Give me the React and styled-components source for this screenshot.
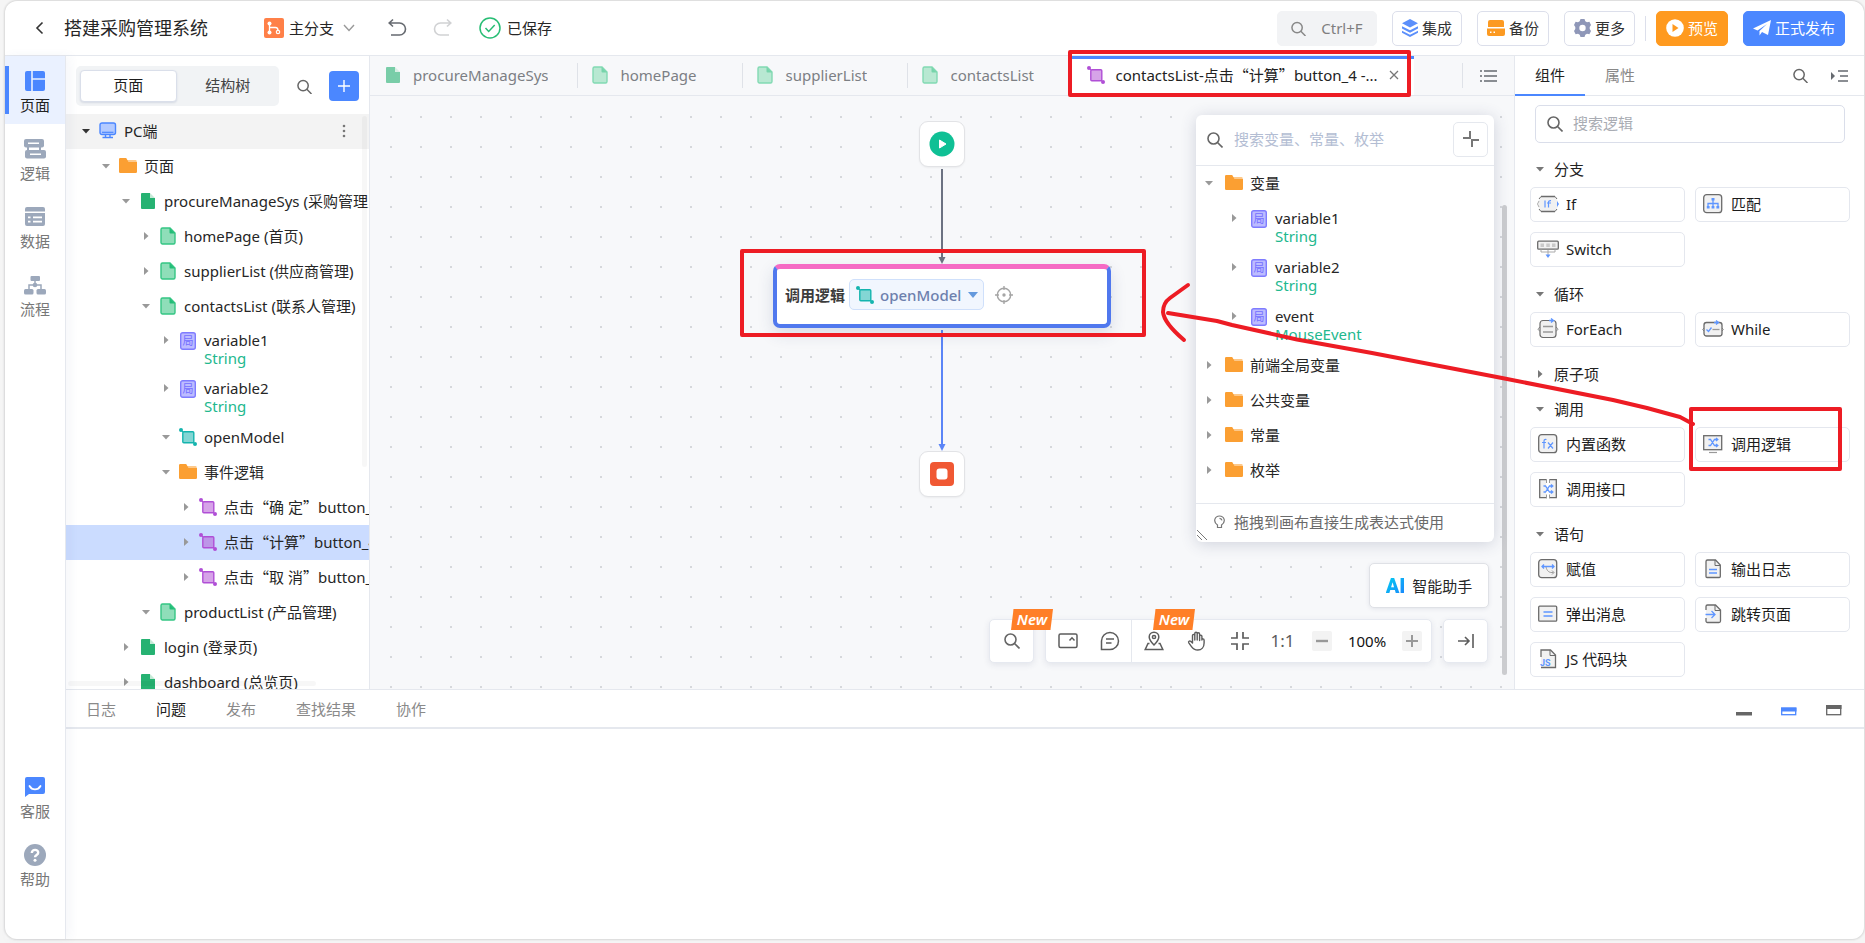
import React from "react";
import styled, { createGlobalStyle, css } from "styled-components";

const BLUE = "#4b87ff";
const GREY = "#666a70";
const LINE = "#e5e8ee";
const RED = "#ed1c24";

const GlobalStyle = createGlobalStyle`
  *, *::before, *::after { box-sizing: border-box; }
  body {
    margin: 0;
    background: #f5f5f5;
    color: #262626;
    font: 15px/20px "Noto Sans", "Noto Sans CJK SC", sans-serif;
  }
  button, input, select { font: inherit; color: inherit; }
  button { border: 0; background: none; padding: 0; cursor: pointer; }
  svg { display: block; flex: none; }
`;

/* ---------- frame ---------- */

const Page = styled.div`
  height: 100vh;
  min-height: 900px;
  padding: 1px 1px 4px 5px;
`;
const Frame = styled.div`
  position: relative;
  height: 100%;
  display: flex;
  flex-direction: column;
  background: #fff;
  border-radius: 12px;
  box-shadow: 0 0 2px 1px rgba(0, 0, 0, 0.12);
`;
const Body = styled.div`
  flex: 1;
  min-height: 0;
  display: flex;
`;
const Main = styled.main`
  flex: 1;
  min-width: 0;
  display: flex;
  flex-direction: column;
`;
const Workspace = styled.div`
  flex: 1;
  min-height: 0;
  display: flex;
`;
const RedBox = styled.span`
  position: absolute;
  z-index: 5;
  inset: ${(p) => p.$inset};
  border: 4px solid ${RED};
  border-radius: 2px;
  pointer-events: none;
`;

/* ---------- header ---------- */

const Header = styled.header`
  height: 55px;
  flex: none;
  display: flex;
  align-items: center;
  padding: 0 19px 0 29px;
  border-bottom: 1px solid ${LINE};
`;
const Title = styled.h1`
  margin: 0 56px 0 20px;
  font-size: 18px;
  line-height: 24px;
  font-weight: 400;
`;
const BranchButton = styled.button`
  display: flex;
  align-items: center;
  gap: 5px;
  margin-right: 32px;
  svg:last-child { margin-left: 4px; }
`;
const HistoryButton = styled.button`
  width: 20px;
  margin-right: 26px;
  color: ${GREY};
  opacity: ${(p) => (p.disabled ? 0.3 : 1)};
`;
const Saved = styled.span`
  display: flex;
  align-items: center;
  gap: 6px;
`;
const HeaderActions = styled.div`
  margin-left: auto;
  display: flex;
  align-items: center;
  gap: 15px;
`;
const HeaderButton = styled.button`
  height: 35px;
  padding: 0 9px;
  display: flex;
  align-items: center;
  justify-content: center;
  gap: 4px;
  border-radius: 5px;
  border: 1px solid #dcdfeb;
  color: #333;
  white-space: nowrap;
  ${(p) => p.$tone && css`
    border-color: ${p.$tone};
    background: ${p.$tone};
    color: #fff;
  `}
`;
const QuickSearch = styled(HeaderButton)`
  width: 100px;
  gap: 15px;
  border-color: #f2f3f5;
  background: #f2f3f5;
  color: #7f7f7f;
`;
const HeaderDivider = styled.span`
  width: 1px;
  height: 25px;
  margin: 0 -5px;
  background: #dcdfeb;
`;

/* ---------- rail ---------- */

const Rail = styled.nav`
  width: 61px;
  flex: none;
  display: flex;
  flex-direction: column;
  padding-bottom: 41px;
  border-right: 1px solid ${LINE};
  box-shadow: 4px 0 10px rgba(60, 80, 130, 0.05);
  z-index: 1;
`;
const RailButton = styled.button`
  position: relative;
  height: 68px;
  padding-top: 15px;
  display: flex;
  flex-direction: column;
  align-items: center;
  gap: 4px;
  color: ${(p) => (p.$active ? "#222" : "#777")};
  background: ${(p) => (p.$active ? "#eaf1ff" : "none")};
  ${(p) => p.$active && css`
    &::before {
      content: "";
      position: absolute;
      left: 0;
      top: 10px;
      bottom: 10px;
      width: 4px;
      background: ${BLUE};
    }
  `}
`;
const RailIcon = styled.span`
  height: 20px;
  display: flex;
  align-items: center;
`;
const RailSpacer = styled.div`
  flex: 1;
`;

/* ---------- page tree ---------- */

const TreePanel = styled.aside`
  position: relative;
  width: 304px;
  flex: none;
  display: flex;
  flex-direction: column;
  overflow: hidden;
  border-right: 1px solid ${LINE};
`;
const TreeTools = styled.div`
  height: 58px;
  flex: none;
  display: flex;
  align-items: center;
  padding: 2px 10px 0;
`;
const Segment = styled.div`
  width: 203px;
  height: 40px;
  padding: 4px;
  display: flex;
  gap: 4px;
  margin-right: 18px;
  border-radius: 5px;
  background: #f1f3f5;
`;
const SegmentButton = styled.button`
  flex: 1;
  padding-bottom: 2px;
  border-radius: 4px;
  color: ${(p) => (p.$active ? "#1d1d1d" : "#444")};
  ${(p) => p.$active && css`
    background: #fff;
    border: 1px solid #dadfea;
    box-shadow: 0 1px 2px rgba(60, 80, 130, 0.15);
  `}
`;
const AddButton = styled.button`
  width: 30px;
  height: 30px;
  margin-left: auto;
  display: grid;
  place-items: center;
  border-radius: 4px;
  background: ${BLUE};
`;
const Tree = styled.ul`
  list-style: none;
  margin: 0;
  padding: 0;
  flex: 1;
  min-height: 0;
  overflow: hidden;
`;
const TreeRow = styled.li`
  display: flex;
  align-items: ${(p) => (p.$typed ? "flex-start" : "center")};
  height: ${(p) => (p.$typed ? p.$typedHeight : 35)}px;
  padding-top: ${(p) => (p.$typed ? p.$typedHeight - 41 : 0)}px;
  padding-bottom: ${(p) => (p.$typed ? 0 : 2)}px;
  padding-left: ${(p) => p.$start + p.$level * p.$indent}px;
  white-space: nowrap;
  background: ${(p) => p.$bg || "none"};
`;
const Caret = styled.button`
  width: 20px;
  height: 18px;
  flex: none;
  display: grid;
  place-items: center;
  color: ${(p) => (p.$dark ? "#333" : "#999")};
  margin-right: ${(p) => p.$gap}px;
`;
const RowIcon = styled.span`
  width: 20px;
  height: 20px;
  flex: none;
  display: grid;
  place-items: center;
  margin-right: 6px;
`;
const RowText = styled.span`
  line-height: 18px;
`;
const TypeText = styled.span`
  display: block;
  color: #22b88e;
`;
const MoreButton = styled.button`
  margin-left: auto;
  margin-right: 23px;
  color: #777;
`;
const Quote = styled.span`
  font-family: "Noto Sans CJK SC", sans-serif;
`;
const ScrollThumb = styled.span`
  position: absolute;
  inset: ${(p) => p.$inset};
  width: ${(p) => p.$width}px;
  height: ${(p) => (p.$height ? `${p.$height}px` : "auto")};
  border-radius: 3px;
  background: ${(p) => p.$color || "rgba(0, 0, 0, 0.03)"};
`;

/* ---------- editor ---------- */

const Editor = styled.section`
  flex: 1;
  min-width: 0;
  display: flex;
  flex-direction: column;
`;
const TabBar = styled.div`
  height: 40px;
  flex: none;
  display: flex;
  background: #f7f8fa;
  border-bottom: 1px solid ${LINE};
`;
const FileTab = styled.div`
  position: relative;
  height: 39px;
  min-width: ${(p) => (p.$active ? 0 : 165)}px;
  flex: 0 1 ${(p) => (p.$active ? "342px" : "auto")};
  display: flex;
  align-items: center;
  padding: 0 ${(p) => (p.$active ? 15 : 29)}px 2px 15px;
  white-space: nowrap;
  color: #7c7f84;
  & + &::before {
    content: "";
    position: absolute;
    left: 0;
    top: 7px;
    height: 25px;
    width: 1px;
    background: ${(p) => (p.$active ? "none" : "#dfe2e8")};
  }
  ${(p) => p.$active && css`
    background: #fff;
    color: #222;
    box-shadow: inset 0 3px 0 ${BLUE};
  `}
`;
const TabIcon = styled.span`
  width: 16px;
  display: grid;
  place-items: center;
  margin-right: 12px;
  opacity: ${(p) => (p.$faded ? 0.6 : 1)};
`;
const TabName = styled.span`
  overflow: hidden;
  text-overflow: clip;
`;
const TabClose = styled.button`
  margin-left: auto;
  color: #777;
`;
const TabListButton = styled.button`
  width: 52px;
  height: 25px;
  margin: 7px 0 0 auto;
  flex: none;
  display: grid;
  place-items: center;
  border-left: 1px solid #dfe2e8;
  color: ${GREY};
`;
const Canvas = styled.div`
  position: relative;
  flex: 1;
  min-height: 0;
  background: radial-gradient(circle at 15px 15px, #d6d8dc 1px, transparent 1px) 6px 6px / 30px 30px #f7f8fa;
`;
const Flow = styled.div`
  display: flex;
  flex-direction: column;
  align-items: center;
  padding-top: 25px;
`;
const EndNode = styled.div`
  width: 46px;
  height: 46px;
  display: grid;
  place-items: center;
  border: 1px solid #e2e3e6;
  border-radius: 9px;
  background: #fff;
  box-shadow: 0 1px 2px rgba(0, 0, 0, 0.05);
`;
const CallNode = styled.div`
  position: relative;
  width: 338px;
  height: 64px;
  display: flex;
  align-items: center;
  padding: 0 8px 4px;
  border: 4px solid #5078ee;
  border-top: 5px solid #f56ac4;
  border-radius: 7px;
  background: #fff;
  box-shadow: 0 6px 16px rgba(40, 60, 110, 0.15);
  margin-bottom: 2px;
`;
const NodeTitle = styled.strong`
  font-weight: 700;
  color: #3c3c3c;
  margin-right: 4px;
`;
const ModelPicker = styled.label`
  position: relative;
  height: 31px;
  width: 135px;
  display: flex;
  align-items: center;
  gap: 6px;
  padding: 0 6px;
  margin-right: 10px;
  border: 1px solid #cfe0fb;
  border-radius: 5px;
  background: #f1f6fe;
`;
const ModelSelect = styled.select`
  appearance: none;
  border: 0;
  padding: 0;
  width: 84px;
  background: none;
  color: #6d80ad;
  font-weight: 500;
`;
const PlainButton = styled.button`
  display: grid;
  place-items: center;
  color: ${(p) => p.$color || GREY};
`;

/* ---------- variable palette ---------- */

const Palette = styled.section`
  position: absolute;
  top: 19px;
  right: 20px;
  width: 298px;
  height: 427px;
  display: flex;
  flex-direction: column;
  border-radius: 6px;
  background: #fff;
  box-shadow: 0 2px 16px rgba(50, 60, 100, 0.2);
`;
const PaletteSearch = styled.label`
  height: 51px;
  flex: none;
  display: flex;
  align-items: center;
  gap: 11px;
  padding: 0 6px 0 11px;
  border-bottom: 1px solid ${LINE};
`;
const SearchInput = styled.input`
  flex: 1;
  min-width: 0;
  border: 0;
  outline: 0;
  padding: 0 0 2px;
  background: none;
  &::placeholder { color: ${(p) => p.$hint}; opacity: 1; }
`;
const FoldButton = styled.button`
  width: 35px;
  height: 35px;
  display: grid;
  place-items: center;
  border: 1px solid ${LINE};
  border-radius: 5px;
  margin-bottom: 2px;
`;
const PaletteTip = styled.p`
  position: relative;
  height: 39px;
  flex: none;
  margin: 0;
  display: flex;
  align-items: center;
  gap: 9px;
  padding: 0 0 2px 18px;
  border-top: 1px solid ${LINE};
  color: #6a6a6a;
`;
const Grip = styled.svg`
  position: absolute;
  left: 1px;
  bottom: 2px;
`;

/* ---------- canvas toolbar ---------- */

const Assistant = styled.button`
  position: absolute;
  right: 25px;
  bottom: 81px;
  width: 120px;
  height: 45px;
  display: flex;
  align-items: center;
  justify-content: center;
  gap: 7px;
  border: 1px solid #dfe1e6;
  border-radius: 5px;
  background: #fff;
  box-shadow: 0 1px 4px rgba(50, 60, 100, 0.1);
`;
const AiMark = styled.b`
  font: 900 20px/24px Roboto, sans-serif;
  color: transparent;
  background: linear-gradient(135deg, #00d5ee, #1d7dff);
  background-clip: text;
`;
const Toolbar = styled.div`
  position: absolute;
  right: 26px;
  bottom: 26px;
  display: flex;
  gap: 11px;
`;
const ToolGroup = styled.div`
  height: 44px;
  display: flex;
  align-items: center;
  border: 1px solid #e6e9f0;
  border-radius: 5px;
  background: #fff;
  box-shadow: 0 2px 6px rgba(50, 60, 100, 0.1);
`;
const Tool = styled.button`
  position: relative;
  width: 43px;
  height: 42px;
  display: grid;
  place-items: center;
  color: #5c5c5c;
  font-size: 17px;
  border-right: ${(p) => (p.$divided ? `1px solid ${LINE}` : 0)};
`;
const NewBadge = styled.span`
  position: absolute;
  left: 21px;
  top: -11px;
  z-index: 2;
  width: 42px;
  height: 21px;
  background: #ff7f27;
  clip-path: polygon(6% 0, 100% 0, 94% 100%, 0 100%);
  color: #fff;
  font: italic 600 15px/20px "Noto Sans", sans-serif;
  text-align: center;
`;
const ZoomStep = styled.button`
  width: 20px;
  height: 20px;
  display: grid;
  place-items: center;
  border-radius: 2px;
  background: #f3f3f3;
  margin: ${(p) => (p.$last ? "0 9px 0 0" : "0 0 0 8px")};
`;
const ZoomValue = styled.output`
  width: 70px;
  text-align: center;
  color: #111;
`;

/* ---------- component panel ---------- */

const SidePanel = styled.aside`
  width: 350px;
  flex: none;
  display: flex;
  flex-direction: column;
  border-left: 1px solid ${LINE};
`;
const SideTabs = styled.div`
  height: 40px;
  flex: none;
  display: flex;
  padding-right: 16px;
  border-bottom: 1px solid ${LINE};
`;
const SideTab = styled.button`
  width: 70px;
  height: 40px;
  color: ${(p) => (p.$active ? "#222" : "#888")};
  border-bottom: 2px solid ${(p) => (p.$active ? BLUE : "transparent")};
`;
const SideIcons = styled.div`
  margin-left: auto;
  display: flex;
  align-items: center;
  gap: 23px;
`;
const SideBody = styled.div`
  flex: 1;
  padding: 9px 14px 0 15px;
`;
const SideSearch = styled.label`
  height: 38px;
  margin: 0 5px 9px;
  display: flex;
  align-items: center;
  gap: 10px;
  padding: 0 11px;
  border: 1px solid #dadeea;
  border-radius: 5px;
`;
const SectionTitle = styled.button`
  height: 35px;
  width: 100%;
  display: flex;
  align-items: center;
  gap: 10px;
  padding: 0 0 2px 6px;
  color: #222;
  svg { color: #777; }
`;
const Items = styled.div`
  display: grid;
  grid-template-columns: 1fr 1fr;
  gap: 10px;
  padding-bottom: 10px;
`;
const Item = styled.button`
  position: relative;
  height: 35px;
  display: flex;
  align-items: center;
  gap: 7px;
  padding: 0 6px 1px;
  border: 1px solid #e4e7ee;
  border-radius: 5px;
  color: #1c1c1c;
`;

/* ---------- bottom panel ---------- */

const Output = styled.section`
  height: 250px;
  flex: none;
  border-top: 1px solid ${LINE};
`;
const OutputBar = styled.div`
  height: 39px;
  display: flex;
  align-items: center;
  padding: 0 22px 0 0;
  border-bottom: 2px solid ${LINE};
`;
const OutputTab = styled.button`
  padding: 0 20px;
  color: ${(p) => (p.$active ? "#222" : "#8a8a8a")};
`;
const OutputIcons = styled.div`
  margin-left: auto;
  padding-top: 2px;
  display: flex;
  gap: 29px;
`;

const Scribble = styled.svg`
  position: absolute;
  right: 162px;
  top: 279px;
  z-index: 6;
  pointer-events: none;
`;

/* ---------- icons ---------- */

const Svg = ({ w = 20, h = w, vw = w, vh = h, children, ...rest }) => (
  <svg width={w} height={h} viewBox={`0 0 ${vw} ${vh}`} fill="none" aria-hidden="true" {...rest}>{children}</svg>
);
const SearchIcon = ({ size = 16, color = "#666" }) => (
  <Svg w={size} vw={16} stroke={color} strokeWidth="1.6"><circle cx="6.5" cy="6.5" r="5.5" /><path d="m10.5 10.5 5 5" /></Svg>
);
const Tri = ({ open, size = 8 }) => (
  <Svg w={size} vw={8}><path d={open ? "M0 2h8L4 6.500z" : "M2 0v8l4.500-4z"} fill="currentColor" /></Svg>
);
const PageSolid = () => (
  <Svg w={14} h={16}><path d="M1 0h8v5h5v10a1 1 0 0 1-1 1H1a1 1 0 0 1-1-1V1a1 1 0 0 1 1-1z" fill="#26b272" /><path d="M9 0l5 5H9z" fill="#c5ead7" /></Svg>
);
const PageLight = () => (
  <Svg w={16} h={18}><path d="M2.500 1h7.500l5 5v9.500a1.500 1.500 0 0 1-1.500 1.500h-11A1.500 1.500 0 0 1 1 15.500v-13A1.500 1.500 0 0 1 2.500 1z" fill="#8fdeb9" stroke="#35c684" strokeWidth="1.400" /><path d="M9.500 1v4.500a1 1 0 0 0 1 1H15z" fill="#22bd77" /></Svg>
);
const Folder = () => (
  <Svg w={18} h={15}><path d="M8 2h8.500A1.200 1.200 0 0 1 17.700 3v4H8z" fill="#fdc98b" /><path d="M1.200 0h6L9.500 4H18v9.700a1.300 1.300 0 0 1-1.300 1.300H1.300A1.300 1.300 0 0 1 0 13.700V1.200A1.200 1.200 0 0 1 1.200 0z" fill="#fb9f32" /></Svg>
);
const Monitor = () => (
  <Svg w={18} h={17}><rect x="1" y="1" width="15.500" height="11.500" rx="2" fill="#b3caff" stroke={BLUE} strokeWidth="1.400" /><path d="M3 10.300h11.500" stroke={BLUE} strokeWidth="1.200" /><path d="M6.500 13v2M11 13v2M3.500 15.500h10.500" stroke={BLUE} strokeWidth="1.400" /></Svg>
);
const LocalVar = () => (
  <Svg w={16} h={18}><rect x=".7" y=".7" width="14.600" height="16.600" rx="2" fill="#bdbcff" stroke="#7f7cff" strokeWidth="1.400" /><text x="8" y="13" textAnchor="middle" fontSize="11" fontFamily="Noto Sans CJK SC, sans-serif" fill="#736fff">局</text></Svg>
);
const LogicMark = ({ fill = "#d6a3e8", line = "#b04fd6", size = 18 }) => (
  <Svg w={size} vw={18}><rect x="3.800" y="3.800" width="11" height="11" rx="1" fill={fill} stroke={line} strokeWidth="1.400" /><path d="m1.500 1.500 2.500 2.500M14.500 14.500l2 2" stroke={line} /><circle cx="2" cy="2" r="2" fill={line} /><circle cx="16" cy="16" r="2" fill={line} /></Svg>
);
const TEAL = { fill: "#83d6d4", line: "#14b4ae" };

const railIcons = {
  page: <Svg><rect width="20" height="20" rx="2" fill={BLUE} /><path d="M7 0v20M7 8h13" stroke="#eaf1ff" strokeWidth="1.600" /></Svg>,
  logic: <Svg w={22} h={20}><rect x="0" y="0" width="20" height="8.500" rx="2" fill="#9ca8bb" /><rect x="1" y="11" width="21" height="8.500" rx="2" fill="#9ca8bb" /><path d="M16 8v4M4 8v4" stroke="#9ca8bb" strokeWidth="2" /><path d="M4 4.300h11M6 15.300h11" stroke="#fff" strokeWidth="1.600" /></Svg>,
  data: <Svg><path d="M2 0h16a2 2 0 0 1 2 2v2.500H0V2a2 2 0 0 1 2-2z" fill="#9ca8bb" /><path d="M0 6h20v11a2 2 0 0 1-2 2H2a2 2 0 0 1-2-2z" fill="#9ca8bb" /><path d="M3 10.300h2.500M8 10.300h9M3 14.700h2.500M8 14.700h9" stroke="#fff" strokeWidth="1.700" /></Svg>,
  flow: <Svg w={22} h={20}><rect x="6.500" y="1" width="9.500" height="5" rx="1" fill="#9ca8bb" /><rect x="0" y="14" width="9.500" height="5.500" rx="1.500" fill="#9ca8bb" /><rect x="12.500" y="14" width="9.500" height="5.500" rx="1.500" fill="#9ca8bb" /><path d="M11 5v5M5 14v-4h12v4" stroke="#9ca8bb" strokeWidth="1.500" /><circle cx="11" cy="10" r="2.300" fill="#9ca8bb" /></Svg>,
  service: <Svg><path d="M2 0h16a2 2 0 0 1 2 2v13a2 2 0 0 1-2 2H4l-4 3V2a2 2 0 0 1 2-2z" fill={BLUE} /><path d="M4.500 9c2.500 4.500 8.500 4.500 11 0" stroke="#fff" strokeWidth="1.800" strokeLinecap="round" /></Svg>,
  help: <Svg w={22}><circle cx="11" cy="11" r="11" fill="#9ca8bb" /><path d="M7.800 9c0-4.300 6.600-4 6.400-.3C14.200 11 11 11 11 13.300" stroke="#fff" strokeWidth="2.400" /><circle cx="11" cy="16.300" r="1.500" fill="#fff" /></Svg>,
};

const D = "#6b6b6b";
const G = "#f1f1f1";
const B = "#5f96ff";
const shuffle = "M1 1.500h2l4 6h3M1 7.500h2l4-6h3M8.500 0l1.800 1.500L8.500 3M8.500 6l1.800 1.500L8.500 9";
const itemIcons = {
  if: <Svg w={22}><path d="M4 3.500h14l2.500 4v7l-2.500 4H4l-2.500-4v-7z" fill={G} stroke="none" /><path d="M4 3.500h14M4 18.500h14" stroke={D} strokeWidth="1.400" /><path d="M4 3.500 2 6M2 16l2 2.500M18 3.500 20 6M20 16l-2 2.500" stroke={D} /><path d="M2 8 .5 11 2 14" stroke="#aaa" /><path d="M20 8v6l2-3z" fill={B} /><path d="M8 7.500v7M11.500 14.500V9.500c0-1.500.8-2 2.500-1.800M10 10h4" stroke={B} strokeWidth="1.200" /></Svg>,
  match: <Svg w={22}><rect x="1.700" y="1.700" width="18" height="18" rx="3" fill={G} stroke={D} strokeWidth="1.300" /><path d="M11 6v9M6 14v-3.500h10V14" stroke={B} strokeWidth="1.300" /><path d="M9.500 5h3v2.500h-3zM4.800 13h2.800v2.500H4.800zM9.600 13h2.800v2.500H9.600zM14.400 13h2.800v2.500h-2.800z" fill={B} /></Svg>,
  switch: <Svg w={22}><rect x=".7" y="3.200" width="20.600" height="8" rx="1" fill={G} stroke={D} strokeWidth="1.300" /><path d="M3.500 5.500h3.500v3.500H3.500zM9.300 5.500h3.500v3.500H9.300zM15 5.500h3.500v3.500H15z" fill="#c9c9c9" /><path d="M4 11.500v2.500h14v-2.500M11 12v5" stroke="#aaa" /><path d="M8.500 16.500h5L11 20z" fill={B} /></Svg>,
  foreach: <Svg w={22}><path d="M3 9 .8 11 3 13.500M19 9l2.200 2-2.200 2.500" stroke="#999" /><rect x="3" y="2.500" width="16" height="17" rx="3" fill={G} stroke={D} strokeWidth="1.200" /><path d="M6 8.500h10M6 14h10" stroke="#999" strokeWidth="1.300" /><path d="M12 2.500h4M14 .5l2.500 2L14 4.500" stroke={B} strokeWidth="1.300" /></Svg>,
  while: <Svg w={22}><path d="M2.500 9.500.5 11.500l2 2M19.500 9.500l2 2-2 2" stroke="#999" /><rect x="2" y="4.500" width="18" height="13.500" rx="2.500" fill={G} stroke={D} strokeWidth="1.300" /><path d="M10.500 11.500h7" stroke="#999" strokeWidth="1.300" /><path d="m4.500 11.500 2 2 3-4M12 4.500h4M14 2.500l2.500 2-2.500 2" stroke={B} strokeWidth="1.300" /></Svg>,
  fx: <Svg w={22}><rect x="1.700" y="1.700" width="18" height="18" rx="3" fill={G} stroke={D} strokeWidth="1.300" /><path d="M9.500 6.500c-2-.4-2.500.5-2.500 2V15.500M5 9.500h4M11 9.500l5 6M16 9.500l-5 6" stroke={B} strokeWidth="1.200" /></Svg>,
  call: <Svg w={22}><rect x="1.700" y="2.700" width="18" height="14" fill={G} stroke={D} strokeWidth="1.300" /><path d={shuffle} transform="translate(5.500 5)" stroke={B} strokeWidth="1.300" /><path d="M7 19.500h8" stroke="#999" strokeWidth="1.200" /></Svg>,
  api: <Svg w={22}><path d="M9 1.700H2.700v18H9M13 1.700h6.300v18H13" fill={G} stroke={D} strokeWidth="1.300" /><path d="M9.500 1v4M12.500 1v4M9.500 16.500v4M12.500 16.500v4" stroke="#999" /><path d={shuffle} transform="translate(5.500 6.500)" stroke={B} strokeWidth="1.300" /></Svg>,
  assign: <Svg w={22}><rect x="1.700" y="1.700" width="18" height="18" rx="3" fill={G} stroke={D} strokeWidth="1.300" /><path d="M9 9c1 4 3 6 7.500 5.500M15 12.500l2 2-2 2" stroke="#999" /><path d="M5 8.500h12M7 6.500 5 8.500l2 2M15 6.500l2 2-2 2" stroke={B} strokeWidth="1.300" /></Svg>,
  log: <Svg w={22}><path d="M5.500 2h8l4.800 5v11.500a1 1 0 0 1-1 1H5a1 1 0 0 1-1-1v-15A1.500 1.500 0 0 1 5.500 2z" fill={G} stroke={D} strokeWidth="1.300" /><path d="M13 2v5.500h5" stroke={D} /><path d="M7 11.500h8M7 15h8" stroke={B} strokeWidth="1.300" /></Svg>,
  message: <Svg w={22}><rect x="1.700" y="3.200" width="18" height="15" rx="1" fill={G} stroke={D} strokeWidth="1.300" /><path d="M6.500 9h9M6.500 13h9" stroke={B} strokeWidth="1.400" /></Svg>,
  jump: <Svg w={22}><path d="M4 7V3.500A1.500 1.500 0 0 1 5.500 2h8l5 5v11a1.500 1.500 0 0 1-1.500 1.500H5.500A1.500 1.500 0 0 1 4 18v-3" fill={G} stroke={D} strokeWidth="1.300" /><path d="M13 2v5.500h5" stroke={D} /><path d="M3.500 11.500h9.500M9.500 8l3.500 3.500L9.500 15" stroke={B} strokeWidth="1.300" /></Svg>,
  js: <Svg w={22}><path d="M4 9V2h9.500l5 5v12.500H4" fill={G} stroke={D} strokeWidth="1.300" /><path d="M13 2v5.500h5" stroke={D} /><text x="3" y="17.500" fontSize="9" fontWeight="700" fontFamily="Roboto, sans-serif" fill={B}>JS</text></Svg>,
};

/* ---------- data ---------- */

const quoted = (inner) => <><Quote>“</Quote>{inner}<Quote>”</Quote></>;

const pages = [
  { level: 0, open: true, icon: <Monitor />, text: "PC端", bg: "#f3f3f3", dark: true, more: true },
  { level: 1, open: true, icon: <Folder />, text: "页面" },
  { level: 2, open: true, icon: <PageSolid />, text: "procureManageSys (采购管理系统)" },
  { level: 3, icon: <PageLight />, text: "homePage (首页)" },
  { level: 3, icon: <PageLight />, text: "supplierList (供应商管理)" },
  { level: 3, open: true, icon: <PageLight />, text: "contactsList (联系人管理)" },
  { level: 4, icon: <LocalVar />, text: "variable1", type: "String" },
  { level: 4, icon: <LocalVar />, text: "variable2", type: "String" },
  { level: 4, open: true, icon: <LogicMark {...TEAL} />, text: "openModel" },
  { level: 4, open: true, icon: <Folder />, text: "事件逻辑" },
  { level: 5, icon: <LogicMark />, text: <>点击{quoted("确 定")}button_2</> },
  { level: 5, icon: <LogicMark fill="#bd95e8" />, text: <>点击{quoted("计算")}button_4</>, bg: "#cbdcff" },
  { level: 5, icon: <LogicMark />, text: <>点击{quoted("取 消")}button_3</> },
  { level: 3, open: true, icon: <PageLight />, text: "productList (产品管理)" },
  { level: 2, icon: <PageSolid />, text: "login (登录页)" },
  { level: 2, icon: <PageSolid />, text: "dashboard (总览页)" },
];

const variables = [
  { level: 0, open: true, icon: <Folder />, text: "变量" },
  { level: 1, icon: <LocalVar />, text: "variable1", type: "String" },
  { level: 1, icon: <LocalVar />, text: "variable2", type: "String" },
  { level: 1, icon: <LocalVar />, text: "event", type: "MouseEvent" },
  { level: 0, icon: <Folder />, text: "前端全局变量" },
  { level: 0, icon: <Folder />, text: "公共变量" },
  { level: 0, icon: <Folder />, text: "常量" },
  { level: 0, icon: <Folder />, text: "枚举" },
];

const sections = [
  { title: "分支", items: [["if", "If"], ["match", "匹配"], ["switch", "Switch"]] },
  { title: "循环", items: [["foreach", "ForEach"], ["while", "While"]] },
  { title: "原子项" },
  { title: "调用", items: [["fx", "内置函数"], ["call", "调用逻辑"], ["api", "调用接口"]] },
  { title: "语句", items: [["assign", "赋值"], ["log", "输出日志"], ["message", "弹出消息"], ["jump", "跳转页面"], ["js", "JS 代码块"]] },
];

/* ---------- parts ---------- */

function Rows({ rows, start, indent, gap, typedHeight }) {
  return (
    <Tree role="tree">
      {rows.map((r, i) => (
        <TreeRow key={i} role="treeitem" $typed={!!r.type} $typedHeight={typedHeight} $start={start} $level={r.level} $indent={indent} $bg={r.bg}>
          <Caret aria-label="展开" $dark={r.dark} $gap={gap}><Tri open={r.open} /></Caret>
          <RowIcon>{r.icon}</RowIcon>
          <RowText>{r.text}{r.type && <TypeText>{r.type}</TypeText>}</RowText>
          {r.more && (
            <MoreButton aria-label="更多">
              <Svg w={4} h={14}><g fill="currentColor"><circle cx="2" cy="2" r="1.300" /><circle cx="2" cy="7" r="1.300" /><circle cx="2" cy="12" r="1.300" /></g></Svg>
            </MoreButton>
          )}
        </TreeRow>
      ))}
    </Tree>
  );
}

function TopBar() {
  return (
    <Header>
      <PlainButton aria-label="返回"><Svg w={10} h={14} stroke="#333" strokeWidth="1.600"><path d="M8.500 1.500 3 7l5.500 5.500" /></Svg></PlainButton>
      <Title>搭建采购管理系统</Title>
      <BranchButton>
        <Svg><rect width="20" height="20" rx="2" fill="#ff8048" /><g stroke="#fff" strokeWidth="1.300"><path d="M5.500 6v8M5.500 9.500h6c2 0 2.500 1 2.500 3" /></g><g fill="#fff"><circle cx="5.500" cy="5.500" r="2" /><circle cx="5.500" cy="14.500" r="2" /></g><circle cx="14" cy="14" r="1.700" fill="#ff8048" stroke="#fff" strokeWidth="1.200" /></Svg>
        主分支
        <Svg w={12} h={8} stroke="#999" strokeWidth="1.400"><path d="m1 1 5 5.500L11 1" /></Svg>
      </BranchButton>
      <HistoryButton aria-label="撤销"><Svg w={20} h={20} stroke="currentColor" strokeWidth="1.600"><path d="M2 5h10.500a5.500 5.500 0 0 1 0 12H4M6 1.500 2.200 5 6 8.500" /></Svg></HistoryButton>
      <HistoryButton aria-label="重做" disabled><Svg w={20} h={20} stroke="currentColor" strokeWidth="1.600"><path d="M18 5H7.500a5.500 5.500 0 0 0 0 12H16M14 1.500 17.800 5 14 8.500" /></Svg></HistoryButton>
      <Saved>
        <Svg w={22} stroke="#27bd74" strokeWidth="1.500"><circle cx="11" cy="11" r="10" /><path d="m6.500 11 3.200 3.500 6-6.500" /></Svg>
        已保存
      </Saved>
      <HeaderActions>
        <QuickSearch><SearchIcon size={15} color="#888" />Ctrl+F</QuickSearch>
        <HeaderButton><Svg w={16} h={18}><path d="m8 0 8 4.200-8 4.300L0 4.200zM0 7.300l8 4 8-4v2.200l-8 4.200-8-4.200zM0 11.700l8 4 8-4v2L8 18l-8-4.300z" fill="#5b8ffb" /></Svg>集成</HeaderButton>
        <HeaderButton><Svg w={18} h={16}><path d="M3 0h12a2 2 0 0 1 2 2v5H1V2a2 2 0 0 1 2-2zM0 8.500h18V14a2 2 0 0 1-2 2H2a2 2 0 0 1-2-2z" fill="#fc9a22" /><path d="M3 12.300h1.500M6.500 12.300H8" stroke="#fff" strokeWidth="1.500" /></Svg>备份</HeaderButton>
        <HeaderButton><Svg w={17} h={18}><path d="M6.500 0h4l.8 2.300 1.700 1 2.400-.5 1.600 3.200-1.300 2v2l1.300 2-1.600 3.200-2.400-.5-1.700 1-.8 2.300h-4l-.8-2.300-1.700-1-2.400.5L0 12l1.300-2V8L0 6l1.600-3.200 2.400.5 1.700-1z" fill="#8f97b8" /><circle cx="8.500" cy="9" r="3.200" fill="#fff" /></Svg>更多</HeaderButton>
        <HeaderDivider />
        <HeaderButton $tone="#ff9a1f"><Svg w={18}><circle cx="9" cy="9" r="8.800" fill="#fff" /><path d="M6.500 5v8l6-4z" fill="#ff9a1f" /></Svg>预览</HeaderButton>
        <HeaderButton $tone={BLUE}><Svg w={18}><path d="M0 9.500 18 1l-3 15-6-3-2.500 3.500V12L14 5l-9.500 6.500z" fill="#fff" /></Svg>正式发布</HeaderButton>
      </HeaderActions>
    </Header>
  );
}

function Toolbox() {
  return (
    <Toolbar>
      <ToolGroup>
        <Tool aria-label="搜索"><SearchIcon /><NewBadge>New</NewBadge></Tool>
      </ToolGroup>
      <ToolGroup>
        <Tool aria-label="小地图"><Svg w={20} h={16} stroke="currentColor" strokeWidth="1.500"><rect x="1" y="1" width="18" height="13.500" rx="1.500" /><path d="m11.500 7.500 2.500-2.700 2.500 2.700" /></Svg></Tool>
        <Tool aria-label="注释" $divided><Svg w={20} stroke="currentColor" strokeWidth="1.500"><path d="M1.500 18.500V10A8.500 8.500 0 1 1 10 18.500zM6 8h8M6 12h5.500" /></Svg></Tool>
        <Tool aria-label="定位"><Svg w={20} stroke="currentColor" strokeWidth="1.500"><path d="M10 14c-3-3-4.800-5.500-4.800-8a4.800 4.800 0 0 1 9.600 0c0 2.500-1.800 5-4.800 8zM5.500 12.500H4l-2.800 6h17.600l-2.800-6h-1.500" /><circle cx="10" cy="6" r="1.600" /></Svg><NewBadge>New</NewBadge></Tool>
        <Tool aria-label="拖动"><Svg w={20} stroke="currentColor" strokeWidth="1.400" strokeLinejoin="round"><path d="M5.500 12V4.500c0-1.500 2.300-1.500 2.300 0V9 2.500c0-1.700 2.400-1.700 2.400 0V9 3c0-1.600 2.400-1.600 2.400 0v6.500V5.200c0-1.500 2.300-1.500 2.300 0V9c0-1.600 2.200-1.500 2.200.3V12c0 4-2.500 7-6.300 7-3.500 0-5-1.500-6.500-3.700L1.800 11.800c-.8-1.300.8-2.300 1.800-1.500z" /></Svg></Tool>
        <Tool aria-label="适应画布"><Svg w={20} stroke="currentColor" strokeWidth="1.700"><path d="M7 1v6H1M13 1v6h6M7 19v-6H1M13 19v-6h6" /></Svg></Tool>
        <Tool>1:1</Tool>
        <ZoomStep aria-label="缩小"><Svg w={12} h={12} stroke="#999" strokeWidth="2.400"><path d="M0 6h12" /></Svg></ZoomStep>
        <ZoomValue>100%</ZoomValue>
        <ZoomStep $last aria-label="放大"><Svg w={12} h={12} stroke="#999" strokeWidth="2"><path d="M0 6h12M6 0v12" /></Svg></ZoomStep>
      </ToolGroup>
      <ToolGroup>
        <Tool aria-label="收起"><Svg w={16} h={14} stroke="currentColor" strokeWidth="1.600"><path d="M0 7h11M7 3l4 4-4 4M15 0v14" /></Svg></Tool>
      </ToolGroup>
    </Toolbar>
  );
}

function FlowCanvas() {
  return (
    <Canvas>
      <Flow>
        <EndNode><Svg w={26}><circle cx="13" cy="13" r="12.500" fill="#0fc095" /><path d="M10.500 9v8l6.500-4z" fill="#fff" stroke="#fff" strokeLinejoin="round" /></Svg></EndNode>
        <Svg w={10} h={97}><path d="M5 2v89" stroke="#6c7282" strokeWidth="2" /><path d="M1.500 90h7L5 97z" fill="#6c7282" /></Svg>
        <CallNode>
          <NodeTitle>调用逻辑</NodeTitle>
          <ModelPicker>
            <LogicMark {...TEAL} />
            <ModelSelect aria-label="逻辑" defaultValue="openModel"><option>openModel</option></ModelSelect>
            <Svg w={10} h={6}><path d="M0 0h10L5 6z" fill="#6499dd" /></Svg>
          </ModelPicker>
          <PlainButton aria-label="定位逻辑" $color="#a5a5a5"><Svg w={20} stroke="currentColor" strokeWidth="1.400"><circle cx="10" cy="10" r="6.700" /><path d="M10 1v4M10 15v4M1 10h4M15 10h4" /><circle cx="10" cy="10" r="1" fill="currentColor" /></Svg></PlainButton>
          <RedBox $inset="-20px -39px -13px -37px" />
        </CallNode>
        <Svg w={10} h={121}><path d="M5 0v115" stroke="#5b85f7" strokeWidth="2" /><path d="M1.500 114h7L5 121z" fill="#5b85f7" /></Svg>
        <EndNode><Svg w={24}><rect width="24" height="24" rx="4" fill="#f05833" /><rect x="6.500" y="6.500" width="11" height="11" rx="3" fill="#fff" /></Svg></EndNode>
      </Flow>
      <ScrollThumb $inset="109px 7px 14px auto" $color="#cbcccf" $width={5} />
      <Palette>
        <PaletteSearch>
          <SearchIcon />
          <SearchInput placeholder="搜索变量、常量、枚举" aria-label="搜索变量" $hint="#b3bdd3" />
          <FoldButton aria-label="收起"><Svg w={18} stroke="#777" strokeWidth="2"><path d="M8 1v7H1M10 17v-7h7" /></Svg></FoldButton>
        </PaletteSearch>
        <Rows rows={variables} start={3} indent={25} gap={5} typedHeight={49} />
        <PaletteTip>
          <Svg w={11} h={14} stroke="#777" strokeWidth="1.200"><path d="M3.500 10C-1.500 6.500 1 1 5.500 1s7 5.500 2 9v2.500h-4zM5.500 3.300c1.500 0 2.300.8 2.500 2" /></Svg>
          拖拽到画布直接生成表达式使用
          <Grip width="10" height="10" viewBox="0 0 10 10" stroke="#777" fill="none"><path d="M0 0l10 10M0 5l5 5" /></Grip>
        </PaletteTip>
      </Palette>
      <Assistant><AiMark>AI</AiMark>智能助手</Assistant>
      <Toolbox />
    </Canvas>
  );
}

export default function App() {
  return (
    <Page>
      <GlobalStyle />
      <Frame lang="zh-CN">
        <TopBar />
        <Body>
          <Rail>
            <RailButton $active><RailIcon>{railIcons.page}</RailIcon>页面</RailButton>
            <RailButton><RailIcon>{railIcons.logic}</RailIcon>逻辑</RailButton>
            <RailButton><RailIcon>{railIcons.data}</RailIcon>数据</RailButton>
            <RailButton><RailIcon>{railIcons.flow}</RailIcon>流程</RailButton>
            <RailSpacer />
            <RailButton><RailIcon>{railIcons.service}</RailIcon>客服</RailButton>
            <RailButton><RailIcon>{railIcons.help}</RailIcon>帮助</RailButton>
          </Rail>
          <Main>
            <Workspace>
              <TreePanel>
                <TreeTools>
                  <Segment>
                    <SegmentButton $active>页面</SegmentButton>
                    <SegmentButton>结构树</SegmentButton>
                  </Segment>
                  <PlainButton aria-label="搜索"><SearchIcon size={15} /></PlainButton>
                  <AddButton aria-label="新增"><Svg w={12} stroke="#fff" strokeWidth="1.400"><path d="M6 0v12M0 6h12" /></Svg></AddButton>
                </TreeTools>
                <Rows rows={pages} start={10} indent={20} gap={2} typedHeight={48} />
                <ScrollThumb $inset="60px 2px auto auto" $width={5} $height={351} />
                <ScrollThumb $inset="auto auto 3px 2px" $width={248} $height={5} />
              </TreePanel>
              <Editor>
                <TabBar>
                  <FileTab><TabIcon $faded><PageSolid /></TabIcon><TabName>procureManageSys</TabName></FileTab>
                  <FileTab><TabIcon $faded><PageLight /></TabIcon><TabName>homePage</TabName></FileTab>
                  <FileTab><TabIcon $faded><PageLight /></TabIcon><TabName>supplierList</TabName></FileTab>
                  <FileTab><TabIcon $faded><PageLight /></TabIcon><TabName>contactsList</TabName></FileTab>
                  <FileTab $active>
                    <TabIcon><LogicMark /></TabIcon>
                    <TabName>contactsList-点击{quoted("计算")}button_4 -...</TabName>
                    <TabClose aria-label="关闭"><Svg w={10} stroke="currentColor" strokeWidth="1.300"><path d="m1 1 8 8M9 1 1 9" /></Svg></TabClose>
                    <RedBox $inset="-6px 3px -2px -4px" />
                  </FileTab>
                  <TabListButton aria-label="标签列表"><Svg w={17} h={14} stroke="currentColor" strokeWidth="1.500"><path d="M4 2h13M4 7h13M4 12h13M0 2h2M0 7h2M0 12h2" /></Svg></TabListButton>
                </TabBar>
                <FlowCanvas />
              </Editor>
              <SidePanel>
                <SideTabs>
                  <SideTab $active>组件</SideTab>
                  <SideTab>属性</SideTab>
                  <SideIcons>
                    <PlainButton aria-label="搜索"><SearchIcon size={15} /></PlainButton>
                    <PlainButton aria-label="收起面板"><Svg w={17} h={14} stroke="currentColor" strokeWidth="1.500"><path d="M7 2h10M9 7h8M7 12h10" /><path d="M0 3v8l4-4z" fill="currentColor" stroke="none" /></Svg></PlainButton>
                  </SideIcons>
                </SideTabs>
                <SideBody>
                  <SideSearch><SearchIcon /><SearchInput placeholder="搜索逻辑" aria-label="搜索逻辑" $hint="#a9acb3" /></SideSearch>
                  {sections.map((s) => (
                    <React.Fragment key={s.title}>
                      <SectionTitle><Tri open={!!s.items} />{s.title}</SectionTitle>
                      {s.items && (
                        <Items>
                          {s.items.map(([icon, name]) => (
                            <Item key={icon}>{itemIcons[icon]}{name}{icon === "call" && <RedBox $inset="-21px 7px -10px -7px" />}</Item>
                          ))}
                        </Items>
                      )}
                    </React.Fragment>
                  ))}
                </SideBody>
              </SidePanel>
            </Workspace>
            <Output>
              <OutputBar>
                <OutputTab>日志</OutputTab>
                <OutputTab $active>问题</OutputTab>
                <OutputTab>发布</OutputTab>
                <OutputTab>查找结果</OutputTab>
                <OutputTab>协作</OutputTab>
                <OutputIcons>
                  <PlainButton aria-label="最小化"><Svg w={16} h={12}><path d="M0 8h16v3.500H0z" fill="#666" /></Svg></PlainButton>
                  <PlainButton aria-label="默认高度"><Svg w={16} h={12}><rect x=".7" y="4.200" width="14" height="6.500" stroke={BLUE} strokeWidth="1.300" /><path d="M0 3.500h15.500v4H0z" fill={BLUE} /></Svg></PlainButton>
                  <PlainButton aria-label="最大化"><Svg w={16} h={12}><rect x=".7" y="1.700" width="14" height="9" stroke="#666" strokeWidth="1.300" /><path d="M0 1h15.500v4H0z" fill="#666" /></Svg></PlainButton>
                </OutputIcons>
              </OutputBar>
            </Output>
          </Main>
        </Body>
        <Scribble width="545" height="150" viewBox="1157 280 545 150" fill="none" stroke={RED} strokeWidth="4" strokeLinecap="round" strokeLinejoin="round">
          <path d="M1188 285 1170 298Q1163 303 1163 312Q1164 323 1184 340" />
          <path d="M1168 313 1217 321 1232 325 1297 339.500 1372 353 1502 378 1613 400 1647 408 1680 417 1693 424" />
        </Scribble>
      </Frame>
    </Page>
  );
}
